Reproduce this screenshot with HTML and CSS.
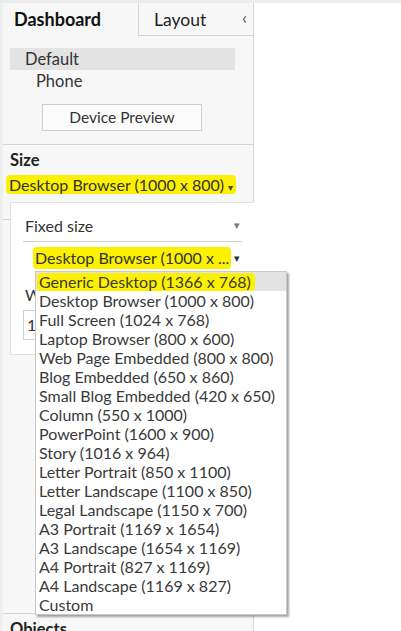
FILE: index.html
```html
<!DOCTYPE html>
<html>
<head>
<meta charset="utf-8">
<link rel="stylesheet" href="styles.css">
</head>
<body>
<div class="app">
  <aside class="panel">
    <div class="tabs">
      <div class="tab tab-active">Dashboard</div>
      <div class="tab tab-layout">Layout</div>
      <div class="tab tab-collapse">&lsaquo;</div>
    </div>
    <div class="devices">
      <div class="device device-selected">Default</div>
      <div class="device device-phone">Phone</div>
      <div class="btn-row"><div class="btn">Device Preview</div></div>
    </div>
    <div class="size-section">
      <div class="section-title">Size</div>
      <div class="size-value"><span class="hl">Desktop Browser (1000 x 800) <span class="caret-s">&#9662;</span></span></div>
    </div>
    <div class="rest"></div>
    <div class="objects">
      <div class="section-title">Objects</div>
    </div>
  </aside>
  <main class="canvas"></main>

  <div class="popover">
    <div class="select select-fixed">
      <span>Fixed size</span><span class="caret">&#9662;</span>
    </div>
    <div class="select select-preset">
      <span class="hl hl-preset">Desktop Browser (1000 x ...</span><span class="caret caret-dark">&#9662;</span>
    </div>
    <div class="w-label">W</div>
    <div class="w-input">1</div>
  </div>

  <ul class="list">
    <li class="item item-active"><span class="hl">Generic Desktop (1366 x 768)</span></li>
    <li class="item">Desktop Browser (1000 x 800)</li>
    <li class="item">Full Screen (1024 x 768)</li>
    <li class="item">Laptop Browser (800 x 600)</li>
    <li class="item">Web Page Embedded (800 x 800)</li>
    <li class="item">Blog Embedded (650 x 860)</li>
    <li class="item">Small Blog Embedded (420 x 650)</li>
    <li class="item">Column (550 x 1000)</li>
    <li class="item">PowerPoint (1600 x 900)</li>
    <li class="item">Story (1016 x 964)</li>
    <li class="item">Letter Portrait (850 x 1100)</li>
    <li class="item">Letter Landscape (1100 x 850)</li>
    <li class="item">Legal Landscape (1150 x 700)</li>
    <li class="item">A3 Portrait (1169 x 1654)</li>
    <li class="item">A3 Landscape (1654 x 1169)</li>
    <li class="item">A4 Portrait (827 x 1169)</li>
    <li class="item">A4 Landscape (1169 x 827)</li>
    <li class="item">Custom</li>
  </ul>
</div>
</body>
</html>
```

FILE: styles.css
```css
* { box-sizing: border-box; }
html, body { margin: 0; padding: 0; }
body {
  font-family: Lato, "Open Sans", sans-serif;
  color: #333;
  background: #fff;
  width: 401px;
  height: 631px;
  overflow: hidden;
}
.app {
  position: relative;
  display: flex;
  height: 631px;
  border-top: 3px solid #ececec;
}
.panel {
  width: 254px;
  flex: none;
  background: #f7f7f7;
  border-right: 1px solid #d6d6d6;
  border-left: 3px solid #efefef;
  display: flex;
  flex-direction: column;
}
.canvas { flex: 1; background: #fff; }

.tabs {
  display: flex;
  height: 33px;
  margin-left: -3px;
}
.tab {
  font-size: 17.5px;
  line-height: 33px;
  color: #222;
}
.tab-active {
  width: 138px;
  padding-left: 14px;
  font-weight: 700;
  font-size: 18px;
  color: #111;
}
.tab-layout {
  width: 102px;
  padding-left: 15px;
  border-left: 1px solid #d6d6d6;
  border-bottom: 1px solid #d6d6d6;
}
.tab-collapse {
  flex: 1;
  border-bottom: 1px solid #d6d6d6;
  font-size: 18px;
  color: #555;
  padding-left: 2px;
  line-height: 28px;
}

.devices {
  padding: 12px 0 0 7px;
  height: 109px;
  border-bottom: 1px solid #d6d6d6;
}
.device {
  font-size: 16.5px;
  height: 22px;
  line-height: 22px;
  color: #333;
}
.device-selected {
  width: 225px;
  background: #e3e3e3;
  padding-left: 15px;
}
.device-phone {
  padding-left: 26px;
}
.btn-row { padding: 12px 0 0 32px; }
.btn {
  width: 160px;
  height: 27px;
  border: 1px solid #cfcfcf;
  background: #fbfbfb;
  font-size: 15.5px;
  line-height: 25px;
  text-align: center;
  color: #333;
}

.size-section {
  padding: 5px 0 0 7px;
  height: 75px;
  border-bottom: 1px solid #d6d6d6;
}
.section-title {
  font-size: 16.5px;
  font-weight: 700;
  color: #222;
  line-height: 20px;
}
.size-value {
  font-size: 16px;
  line-height: 20px;
  margin-top: 5px;
  margin-left: -4px;
  white-space: nowrap;
}
.hl {
  background: #fbf100;
  border-radius: 4px;
  padding: 0 3px;
}
.caret-s { font-size: 10px; color: #444; }

.rest { flex: 1; border-bottom: 1px solid #d6d6d6; }
.objects { height: 17px; padding: 5px 0 0 7px; overflow: hidden; }

.popover {
  position: absolute;
  left: 10px;
  top: 199px;
  width: 244px;
  height: 153px;
  background: #fff;
  border: 1px solid #e2e2e2;
  border-right: none;
  padding: 12px 12px 0 12px;
}
.select {
  display: flex;
  justify-content: space-between;
  align-items: center;
  font-size: 16px;
  white-space: nowrap;
}
.select-fixed {
  height: 27px;
  border-bottom: 1px solid #d0d0d0;
  padding: 0 2px 6px 2px;
}
.select-preset {
  height: 32px;
  padding: 0 2px 0 11px;
}
.hl-preset {
  display: inline-block;
  line-height: 20px;
  padding: 1px 2px 1px 2px;
  margin-left: -1px;
  flex: none;
}
.caret { font-size: 11px; color: #777; flex: none; }
.caret-dark { color: #333; }
.w-label {
  margin-top: 12px;
  font-size: 16px;
  line-height: 18px;
  padding-left: 2px;
}
.w-input {
  margin-top: 6px;
  width: 50px;
  height: 30px;
  border: 1px solid #d0d0d0;
  font-size: 16px;
  line-height: 28px;
  padding-left: 3px;
}

.list {
  position: absolute;
  left: 35px;
  top: 268px;
  width: 252px;
  margin: 0;
  padding: 0;
  list-style: none;
  background: #fff;
  border: 1px solid #c8c8c8;
  box-shadow: 2px 2px 2px rgba(0,0,0,0.35);
}
.item {
  height: 19px;
  line-height: 19px;
  font-size: 16px;
  padding-left: 3px;
  color: #3a3a3a;
  white-space: nowrap;
}
.item-active { background: #e3e3e3; }
.item-active .hl {
  display: inline-block;
  line-height: 18px;
  padding: 0 4px 0 2px;
  margin-left: -2px;
}
```
